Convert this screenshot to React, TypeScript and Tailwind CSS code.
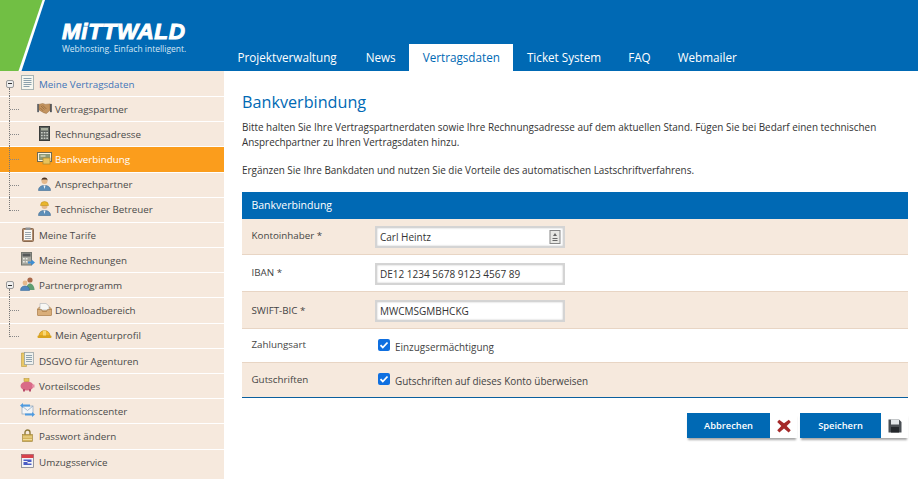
import React from "react";

const Doc = () => (
  <svg width="13" height="15" viewBox="0 0 13 15"><rect x="0.500" y="0.500" width="12" height="14" fill="#f7f7f0" stroke="#a9b4b4" /><path d="M2.500 3.500h8M2.500 5.500h8M2.500 7.500h8M2.500 9.500h8M2.500 11.500h6" stroke="#8aa0ad" /></svg>
);
const Hands = () => (
  <svg width="15" height="11" viewBox="0 0 16 12"><rect x="0" y="1" width="2" height="9" fill="#5f646a" /><rect x="14" y="1" width="2" height="9" fill="#4f545a" /><path d="M2 1.500l4-1 3 1 5-.5v7l-4 3.500-3-1-5-3z" fill="#c4945f" stroke="#8c6238" strokeWidth=".5" /><path d="M4 3l4 4M6 2.500l4 4M3.500 5.500l3 3" stroke="#8c6238" strokeWidth=".8" /></svg>
);
const Calc = () => (
  <svg width="11" height="15" viewBox="0 0 11 15"><rect x="0.500" y="0.500" width="10" height="14" fill="#5e635f" stroke="#3a3d3b" /><rect x="2" y="2" width="7" height="2.500" fill="#a9b09f" /><path d="M2 6h1.700v1.500H2zM4.700 6h1.700v1.500H4.700zM7.300 6H9v1.500H7.300zM2 8.800h1.700v1.500H2zM4.700 8.800h1.700v1.500H4.700zM7.300 8.800H9v1.500H7.300zM2 11.500h1.700V13H2zM4.700 11.500h1.700V13H4.700zM7.300 11.500H9V13H7.300z" fill="#c9cdc6" /></svg>
);
const Bank = () => (
  <svg width="15" height="13" viewBox="0 0 15 13"><rect x="0.500" y="0.500" width="14" height="9" fill="#fbf3dc" stroke="#6f6a55" /><rect x="2" y="2" width="11" height="6" fill="#8d9a78" /><rect x="6" y="6" width="7" height="6" fill="#e8c35c" stroke="#a98528" strokeWidth=".7" /><path d="M3.500 4h5" stroke="#f7f0d8" /></svg>
);
const Person = ({ hat = false }: { hat?: boolean }) => (
  <svg width="13" height="15" viewBox="0 0 13 15"><path d="M0.500 14.500c0-3.500 2.500-5 6-5s6 1.500 6 5z" fill="#5e8fb8" stroke="#3c6a92" strokeWidth=".6" /><path d="M5.500 9.500h2l-1 3.500z" fill="#f4f4f4" /><circle cx="6.500" cy="5" r="3" fill="#e5b98b" />{hat ? <path d="M2.500 4.500a4 4 0 0 1 8 0z" fill="#e9b52d" stroke="#b98a12" strokeWidth=".5" /> : <path d="M3.500 4.500a3 3 0 0 1 6 0l-1-1h-4z" fill="#4b3323" />}</svg>
);
const Clip = () => (
  <svg width="12" height="15" viewBox="0 0 12 15"><rect x="0.500" y="1.500" width="11" height="13" rx="1" fill="#b08d70" stroke="#8a6a50" /><rect x="2" y="3" width="8" height="10" fill="#f8f8f4" /><rect x="3.500" y="0.500" width="5" height="2.500" fill="#8f9498" /><path d="M3 5.500h6M3 7.500h6M3 9.500h6M3 11.500h6" stroke="#99a5ad" /></svg>
);
const CalcArrow = () => (
  <svg width="14" height="14" viewBox="0 0 14 14"><rect x="0.500" y="0.500" width="10" height="12.500" fill="#a6a79f" stroke="#74766f" /><rect x="1.500" y="1.500" width="8" height="3" fill="#56595a" /><path d="M2 6h1.700v1.500H2zM4.800 6h1.700v1.500H4.800zM2 9h1.700v1.500H2zM4.800 9h1.700v1.500H4.800z" fill="#ecece6" /><path d="M7 9.500h3.500V7.500l3.500 3-3.500 3v-2H7z" fill="#3c8fd6" /></svg>
);
const People = () => (
  <svg width="15" height="14" viewBox="0 0 15 14"><circle cx="10" cy="3" r="2.600" fill="#a9694a" /><path d="M6 13c0-4 2-6.500 4-6.500s4.500 2.500 4.500 6.500z" fill="#5f9e72" /><circle cx="5" cy="6" r="2.400" fill="#e5b98b" /><path d="M0.500 13.500c0-3 1.500-4.500 4.500-4.500s4.500 1.500 4.500 4.500z" fill="#4f86bd" stroke="#2f6294" strokeWidth=".5" /></svg>
);
const Inbox = () => (
  <svg width="15" height="13" viewBox="0 0 15 13"><path d="M0.500 6l2-2h10l2 2v6a.5.5 0 0 1-.5.500H1a.5.5 0 0 1-.5-.500z" fill="#d9ae7a" stroke="#a97b46" strokeWidth=".7" /><path d="M3 0.500h6l3 2.500v4H3z" fill="#f7f7f4" stroke="#aab0b5" strokeWidth=".6" /><path d="M0.500 6.500H4.500l1 2h4l1-2h4" fill="none" stroke="#a97b46" strokeWidth=".7" /></svg>
);
const Helmet = () => (
  <svg width="15" height="11" viewBox="0 0 15 11"><path d="M2 7a5.500 5.500 0 0 1 11 0z" fill="#efb62e" stroke="#b98a12" strokeWidth=".6" /><rect x="0.500" y="6.500" width="14" height="2.500" rx="1" fill="#d9a21d" /><rect x="6" y="1.500" width="3" height="5" fill="#f8d776" /></svg>
);
const Folder = () => (
  <svg width="13" height="15" viewBox="0 0 13 15"><path d="M0.500 1h5v13.500h-5z" fill="#e9c766" stroke="#b99a3e" strokeWidth=".6" /><rect x="3.500" y="0.500" width="9" height="12" fill="#eff1ee" stroke="#8e9aa0" strokeWidth=".7" /><path d="M5 3.500h6M5 5.500h6M5 7.500h6M5 9.500h6" stroke="#8ea1ad" /></svg>
);
const Pig = () => (
  <svg width="15" height="14" viewBox="0 0 15 14"><ellipse cx="7" cy="8" rx="6.500" ry="4.500" fill="#d96a87" /><rect x="4" y="0.500" width="5" height="3" fill="#e6c35a" stroke="#b3902f" strokeWidth=".5" /><rect x="3" y="11" width="2" height="2.500" fill="#b9506c" /><rect x="9" y="11" width="2" height="2.500" fill="#b9506c" /><path d="M12 6.500l2.500 0v3H12z" fill="#e58aa2" /></svg>
);
const Mail = () => (
  <svg width="15" height="14" viewBox="0 0 15 14"><rect x="2" y="3" width="11" height="8" fill="#f3f5f7" stroke="#8ba4bb" strokeWidth=".7" /><path d="M2 3l5.500 4.500L13 3" fill="none" stroke="#8ba4bb" strokeWidth=".7" /><path d="M0 2.500L3 0v1.500h7v2H3V5zM15 11.500L12 14v-1.500H5v-2h7V9z" fill="#4f9be0" /></svg>
);
const Lock = () => (
  <svg width="11" height="13" viewBox="0 0 11 13"><path d="M3 6V3.500a2.500 2.500 0 0 1 5 0V6" fill="none" stroke="#8f7a3c" strokeWidth="1.400" /><rect x="0.500" y="5.500" width="10" height="7" fill="#d3b25b" stroke="#9c8238" strokeWidth=".6" /><path d="M1 8h9M1 10.500h9" stroke="#f0dc9a" /></svg>
);
const Cal = () => (
  <svg width="13" height="14" viewBox="0 0 13 14"><rect x="0.500" y="0.500" width="12" height="13" fill="#f4f4f6" stroke="#6c6f7c" strokeWidth=".7" /><rect x="0.500" y="0.500" width="12" height="3.500" fill="#d9424a" /><path d="M2.500 5.500h8v2.500h-4v1.500h4v1.500h-8V8h4V7h-4z" fill="#4a5cc4" /></svg>
);

type Item = { label: string; icon: React.ReactNode; sub?: boolean; open?: boolean; active?: boolean; first?: boolean; last?: boolean; end?: boolean };

const items: Item[] = [
  { label: "Meine Vertragsdaten", icon: <Doc />, open: true, first: true },
  { label: "Vertragspartner", icon: <Hands />, sub: true },
  { label: "Rechnungsadresse", icon: <Calc />, sub: true },
  { label: "Bankverbindung", icon: <Bank />, sub: true, active: true },
  { label: "Ansprechpartner", icon: <Person />, sub: true },
  { label: "Technischer Betreuer", icon: <Person hat />, sub: true, last: true },
  { label: "Meine Tarife", icon: <Clip /> },
  { label: "Meine Rechnungen", icon: <CalcArrow /> },
  { label: "Partnerprogramm", icon: <People />, open: true },
  { label: "Downloadbereich", icon: <Inbox />, sub: true },
  { label: "Mein Agenturprofil", icon: <Helmet />, sub: true, last: true },
  { label: "DSGVO für Agenturen", icon: <Folder /> },
  { label: "Vorteilscodes", icon: <Pig /> },
  { label: "Informationscenter", icon: <Mail /> },
  { label: "Passwort ändern", icon: <Lock /> },
  { label: "Umzugsservice", icon: <Cal />, end: true },
];

function Row({ it }: { it: Item }) {
  return (
    <div className={`relative flex h-[25.2px] shrink-0 items-center ${it.end ? "" : "border-b border-white"} ${it.active ? "bg-[#fb9d1c] text-white" : "bg-[#f6e9dd] text-[#4a4a4a]"}`}>
      {it.sub && <span className={`absolute left-[9px] top-[-1px] border-l border-dotted border-[#777] ${it.last ? "h-[14px]" : "h-[27px]"}`} />}
      {it.sub && <span className="absolute left-[10px] top-[12px] w-[9px] border-t border-dotted border-[#888]" />}
      {it.open && (
        <>
          <span className="absolute left-[6px] top-[8px] flex h-[8px] w-[8px] items-center justify-center rounded-[2px] border border-[#999] bg-[#eee]">
            <span className="h-[1px] w-[4px] bg-[#333]" />
          </span>
          <span className="absolute left-[9px] top-[16px] h-[10px] border-l border-dotted border-[#777]" />
        </>
      )}
      <span className={`flex w-[17px] shrink-0 justify-center pb-[2px] ${it.sub ? "ml-[36px]" : "ml-[19px]"}`}>{it.icon}</span>
      <span className={`${it.sub ? "ml-[2px]" : "ml-[3px]"} pt-[2px] text-[9.800px] ${it.first ? "text-[#3f74b8]" : ""} ${it.active ? "font-medium" : ""}`}>{it.label}</span>
    </div>
  );
}

function FormRow({ label, tint, h, pad, last, children }: { label: string; tint?: boolean; h: string; pad: string; last?: boolean; children: React.ReactNode }) {
  return (
    <div className={`flex ${h} ${tint ? "bg-[#f6e9dd]" : "bg-white"} ${last ? "border-b border-[#0a5f9e]" : "border-b border-[#e8d5c4]"}`}>
      <div className={`w-[133px] shrink-0 pl-[9.500px] ${pad} text-[9.800px] text-[#444]`}>{label}</div>
      <div className="flex-1">{children}</div>
    </div>
  );
}

function Field({ value, icon, top }: { value: string; icon?: boolean; top: string }) {
  return (
    <div className={`${top} flex h-[22px] w-[190px] items-center justify-between border-2 border-[#d4d4d4] bg-white pl-[3px] pr-[2px] text-[10px] text-[#333] shadow-[inset_0_0_2px_rgba(0,0,0,0.25)]`}>
      <span>{value}</span>
      {icon && (
        <svg width="12" height="14" viewBox="0 0 12 14"><rect x="1" y="0.500" width="10" height="13" fill="#e8e8e4" stroke="#888" /><path d="M6 3l2 3H4zM3.500 8h5v1h-5zM3.500 10h5v1h-5z" fill="#666" /></svg>
      )}
    </div>
  );
}

function Check({ label }: { label: string }) {
  return (
    <div className="flex items-start pl-[3px] pt-[10px] text-[9.920px] text-[#444]">
      <span className="flex h-[12px] w-[12px] items-center justify-center rounded-[2px] bg-[#0f6fe0]">
        <svg width="10" height="10" viewBox="0 0 10 10"><path d="M1.500 5.200l2.300 2.300 4.700-5" fill="none" stroke="#fff" strokeWidth="1.800" /></svg>
      </span>
      <span className="ml-[5px] mt-[1px]">{label}</span>
    </div>
  );
}

function Btn({ label, w, children }: { label: string; w: string; children: React.ReactNode }) {
  return (
    <div className="flex h-[25px] bg-white shadow-[0_3px_2px_-1px_rgba(0,0,0,0.35)]">
      <div className={`flex ${w} items-center justify-center bg-[#0069b4] text-[9.300px] font-semibold text-white`}>{label}</div>
      <div className="flex w-[27px] items-center justify-center">{children}</div>
    </div>
  );
}

export default function App() {
  return (
    <div className="h-[479px] w-[918px] overflow-hidden bg-white font-['Open_Sans',sans-serif]">
      <header className="flex h-[71px] bg-[#0069b4]">
        <div className="relative h-full w-[224px] shrink-0">
          <svg className="absolute left-0 top-0" width="48" height="71" viewBox="0 0 48 71">
            <path d="M0 0H43L19 71H0z" fill="#71bf44" />
            <path d="M42.500 0H45L21.500 71H18.500z" fill="#fff" />
          </svg>
          <div className="absolute left-[62px] top-[19px] text-[22.500px] font-bold italic leading-[26px] tracking-[0.6px] text-white font-['Liberation_Sans',sans-serif] [-webkit-text-stroke:1px_white]">MiTTWALD</div>
          <div className="absolute left-[62px] top-[42px] text-[8.500px] leading-[13px] text-[#d7e8f5]">Webhosting. Einfach intelligent.</div>
        </div>
        <nav className="flex items-end text-[11.700px] font-medium text-white">
          {["Projektverwaltung", "News", "Vertragsdaten", "Ticket System", "FAQ", "Webmailer"].map((t) => (
            <div key={t} className={`flex h-[27px] items-center ${t === "Projektverwaltung" ? "pl-[13.500px] pr-[15.500px]" : "px-[13.500px]"} ${t === "Vertragsdaten" ? "bg-white text-[#0069b4]" : ""}`}>{t}</div>
          ))}
        </nav>
      </header>
      <div className="flex h-[408px]">
        <aside className="flex w-[224px] shrink-0 flex-col bg-[#f6e9dd] pt-[0.800px]">
          {items.map((it) => <Row key={it.label} it={it} />)}
        </aside>
        <main className="flex-1 pl-[18px] pr-[10px]">
          <h1 className="mt-[20px] text-[16.200px] leading-[22px] text-[#0069b4]">Bankverbindung</h1>
          <p className="mt-[7px] text-[9.920px] leading-[15px] text-[#333]">Bitte halten Sie Ihre Vertragspartnerdaten sowie Ihre Rechnungsadresse auf dem aktuellen Stand. Fügen Sie bei Bedarf einen technischen Ansprechpartner zu Ihren Vertragsdaten hinzu.</p>
          <p className="mt-[13px] text-[9.920px] leading-[15px] text-[#333]">Ergänzen Sie Ihre Bankdaten und nutzen Sie die Vorteile des automatischen Lastschriftverfahrens.</p>
          <div className="mt-[14px] flex h-[27px] items-center bg-[#0069b4] pl-[9.500px] text-[10.500px] font-medium text-white">Bankverbindung</div>
          <FormRow label="Kontoinhaber *" tint h="h-[36px]" pad="pt-[10px]"><Field value="Carl Heintz" icon top="mt-[7px]" /></FormRow>
          <FormRow label="IBAN *" h="h-[37px]" pad="pt-[11px]"><Field value="DE12 1234 5678 9123 4567 89" top="mt-[8px]" /></FormRow>
          <FormRow label="SWIFT-BIC *" tint h="h-[37px]" pad="pt-[12px]"><Field value="MWCMSGMBHCKG" top="mt-[8px]" /></FormRow>
          <FormRow label="Zahlungsart" h="h-[34px]" pad="pt-[9px]"><Check label="Einzugsermächtigung" /></FormRow>
          <FormRow label="Gutschriften" tint h="h-[35px]" pad="pt-[10px]" last><Check label="Gutschriften auf dieses Konto überweisen" /></FormRow>
          <div className="mt-[15px] flex justify-end gap-[3px]">
            <Btn label="Abbrechen" w="w-[83px]">
              <svg width="14" height="14" viewBox="0 0 13 13"><path d="M2 .8l4.500 3.200L11 .8l1.800 2L9 6.500l3.800 4-2 2-4.300-3.700-4.300 3.700-2-2 3.800-4L.2 2.800z" fill="#a52a2a" /></svg>
            </Btn>
            <Btn label="Speichern" w="w-[81px]">
              <svg width="14" height="14" viewBox="0 0 14 14"><path d="M0.500 0.500H11L13.500 3V13.500H0.500z" fill="#4a4f54" /><rect x="3" y="0.500" width="8" height="5" fill="#e3e7ea" /><rect x="3" y="8" width="8" height="5.500" fill="#23272b" /></svg>
            </Btn>
          </div>
        </main>
      </div>
    </div>
  );
}
